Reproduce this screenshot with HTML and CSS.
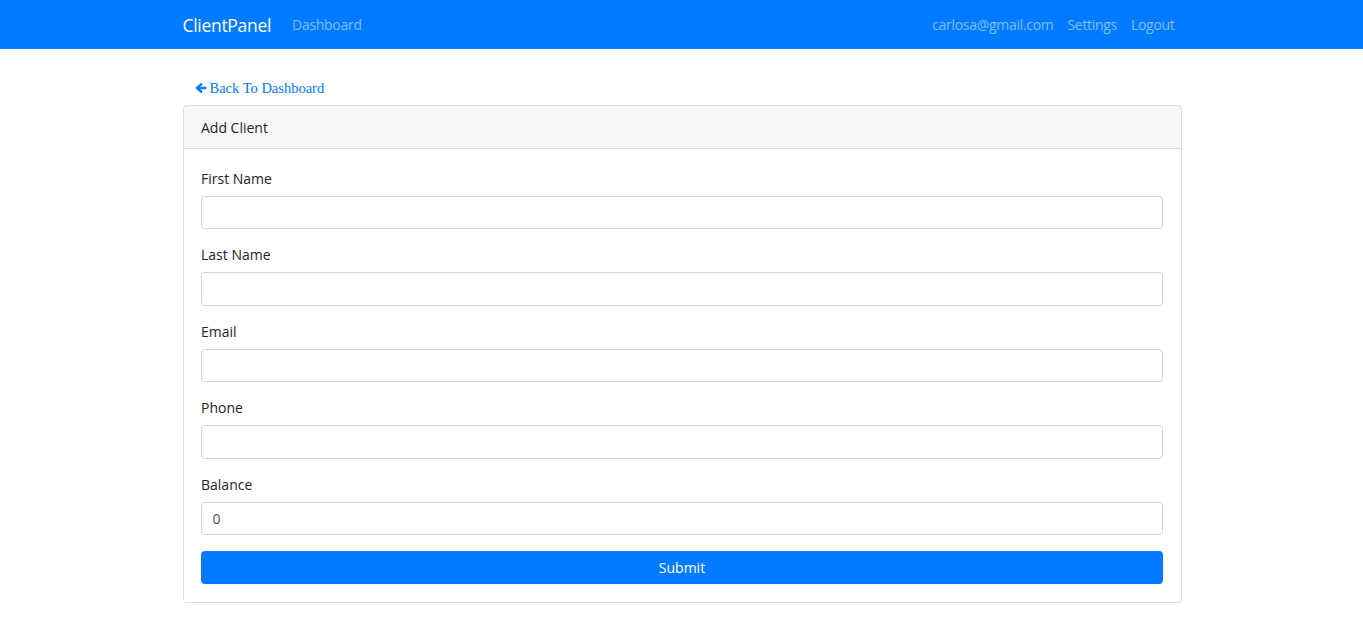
FILE: index.html
```html
<!DOCTYPE html>
<html lang="en">
<head>
    <meta charset="UTF-8">
    <meta name="viewport" content="width=device-width, initial-scale=1.0">
    <title>ClientPanel</title>
    <link rel="stylesheet" href="styles.css">
</head>
<body>

<!-- Top navbar -->
<nav class="navbar">
    <div class="container nav-inner">
        <div class="nav-left">
            <a href="#" class="brand">ClientPanel</a>
            <a href="#" class="nav-link">Dashboard</a>
        </div>
        <div class="nav-right">
            <a href="#" class="nav-link">carlosa@gmail.com</a>
            <a href="#" class="nav-link">Settings</a>
            <a href="#" class="nav-link">Logout</a>
        </div>
    </div>
</nav>

<div class="container main">
    <a href="#" class="back-link">
        <svg class="back-icon" viewBox="0 0 12 12" width="12" height="12">
            <path d="M5.6 1.2 L0.9 5.3 Q0.3 6 0.9 6.7 L5.6 10.8 Q6.2 11.3 6.8 10.8 L7.3 10.2 Q7.8 9.6 7.3 9.1 L5.2 7.2 H10.6 Q11.4 7.2 11.4 6.4 V5.6 Q11.4 4.8 10.6 4.8 H5.2 L7.3 2.9 Q7.8 2.4 7.3 1.8 L6.8 1.2 Q6.2 0.7 5.6 1.2 Z" fill="currentColor"/>
        </svg>
        Back To Dashboard
    </a>

    <div class="card">
        <div class="card-header">Add Client</div>
        <div class="card-body">
            <form>
                <div class="form-group">
                    <label for="firstName">First Name</label>
                    <input type="text" id="firstName" class="form-control">
                </div>
                <div class="form-group">
                    <label for="lastName">Last Name</label>
                    <input type="text" id="lastName" class="form-control">
                </div>
                <div class="form-group">
                    <label for="email">Email</label>
                    <input type="email" id="email" class="form-control">
                </div>
                <div class="form-group">
                    <label for="phone">Phone</label>
                    <input type="text" id="phone" class="form-control">
                </div>
                <div class="form-group">
                    <label for="balance">Balance</label>
                    <input type="text" id="balance" class="form-control" value="0">
                </div>
                <button type="submit" class="submit-btn">Submit</button>
            </form>
        </div>
    </div>
</div>

</body>
</html>
```

FILE: styles.css
```css
html {
    font-size: 14px;
}

body {
    margin: 0;
    font-family: "Open Sans", "Noto Sans", sans-serif;
    font-size: 14px;
    line-height: 1.5;
    color: #212529;
    background-color: #fff;
}

a {
    text-decoration: none;
}

.container {
    width: 999px;
    margin: 0 auto;
    padding-left: 1px;
}

/* Navbar */
.navbar {
    background-color: #007bff;
    padding: 7px 0;
}

.nav-inner {
    display: flex;
    justify-content: space-between;
    align-items: center;
}

.nav-left,
.nav-right {
    display: flex;
    align-items: center;
}

.brand {
    color: #fff;
    font-size: 17.5px;
    line-height: 26px;
    padding: 4.5px 0;
    margin-right: 14px;
    letter-spacing: -0.3px;
}

.nav-link {
    color: rgba(255, 255, 255, 0.5);
    padding: 7px;
    line-height: 21px;
    letter-spacing: -0.3px;
}

/* Back link */
.main {
    padding-top: 23px;
}

.back-link {
    display: inline-flex;
    align-items: center;
    gap: 3px;
    color: #007bff;
    font-family: "Liberation Serif", serif;
    font-size: 14.5px;
    line-height: 21px;
    padding: 6px 11px 6px 12px;
}

.back-icon {
    margin-top: -1px;
}

/* Card */
.card {
    border: 1px solid rgba(0, 0, 0, 0.125);
    border-radius: 3.5px;
}

.card-header {
    background-color: rgba(0, 0, 0, 0.03);
    border-bottom: 1px solid rgba(0, 0, 0, 0.125);
    padding: 10.5px 17.5px;
    line-height: 21px;
}

.card-body {
    padding: 17.5px 17.5px 18px;
}

.form-group {
    margin-bottom: 14px;
}

.form-group:last-of-type {
    margin-bottom: 15.5px;
}

.form-group label {
    display: block;
    padding-top: 1px;
    margin-bottom: 7px;
    line-height: 21px;
}

.form-control {
    display: block;
    box-sizing: border-box;
    width: 100%;
    height: 33.5px;
    padding: 5.25px 10.5px;
    font-family: inherit;
    font-size: 14px;
    color: #495057;
    border: 1px solid #ced4da;
    border-radius: 3.5px;
    background-color: #fff;
}

.submit-btn {
    display: block;
    width: 100%;
    height: 33.5px;
    font-family: inherit;
    font-size: 14px;
    color: #fff;
    background-color: #007bff;
    border: 1px solid #007bff;
    border-radius: 3.5px;
    cursor: pointer;
}
```
